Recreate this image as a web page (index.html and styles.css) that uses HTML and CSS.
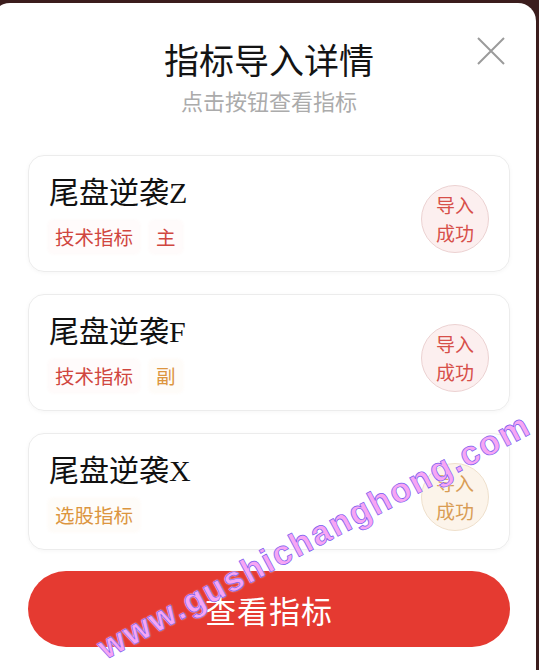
FILE: index.html
```html
<!DOCTYPE html>
<html>
<head>
  <meta charset="utf-8">
  <meta name="viewport" content="width=device-width, initial-scale=1">
  <title>指标导入详情</title>
  <link rel="stylesheet" href="styles.css">
</head>
<body>
  <div class="modal">
    <button class="close" aria-label="关闭">
      <svg viewBox="0 0 28 28" width="28" height="28"><path d="M1 1L27 27M27 1L1 27" stroke="#9b9b9b" stroke-width="2" fill="none"/></svg>
    </button>
    <h1 class="title">指标导入详情</h1>
    <p class="subtitle">点击按钮查看指标</p>

    <div class="list">
      <div class="card">
        <div class="info">
          <div class="name">尾盘逆袭Z</div>
          <div class="tags">
            <span class="tag red">技术指标</span>
            <span class="tag red">主</span>
          </div>
        </div>
        <div class="badge red">导入<br>成功</div>
      </div>

      <div class="card">
        <div class="info">
          <div class="name">尾盘逆袭F</div>
          <div class="tags">
            <span class="tag red">技术指标</span>
            <span class="tag orange">副</span>
          </div>
        </div>
        <div class="badge red">导入<br>成功</div>
      </div>

      <div class="card">
        <div class="info">
          <div class="name">尾盘逆袭X</div>
          <div class="tags">
            <span class="tag orange">选股指标</span>
          </div>
        </div>
        <div class="badge orange">导入<br>成功</div>
      </div>
    </div>

    <button class="view">查看指标</button>
  </div>
  <div class="watermark">www.gushichanghong.com</div>
</body>
</html>
```

FILE: styles.css
```css
body {
  margin: 0;
  background: #3b1d1d;
  font-family: 'Noto Sans CJK SC', sans-serif;
  overflow: hidden;
}

.modal {
  position: relative;
  margin: 3px 3px 0 -8px;
  min-height: 667px;
  padding: 36px 26px 0 36px;
  box-sizing: border-box;
  background: #fff;
  border-radius: 18px 18px 0 0;
}

.close {
  position: absolute;
  top: 34px;
  right: 31px;
  padding: 0;
  border: 0;
  background: none;
  width: 28px;
  height: 28px;
}
.close svg { display: block }

.title {
  margin: 0;
  font-size: 35px;
  line-height: 40px;
  font-weight: 400;
  color: #141414;
  text-align: center;
}
.subtitle {
  margin: 7px 0 0;
  font-size: 22px;
  line-height: 28px;
  color: #ababab;
  text-align: center;
}

.list {
  display: flex;
  flex-direction: column;
  gap: 22px;
  margin-top: 41px;
}

.card {
  display: flex;
  align-items: center;
  justify-content: space-between;
  height: 117px;
  box-sizing: border-box;
  padding: 0 20px;
  border: 1px solid #ececec;
  border-radius: 16px;
  box-shadow: 0 1px 4px rgba(0,0,0,.04);
}

.name {
  font-family: 'Liberation Serif', 'Noto Sans CJK SC', serif;
  font-size: 30px;
  line-height: 36px;
  color: #111;
}

.tags {
  display: flex;
  gap: 11px;
  margin-top: 10px;
}
.tag {
  padding: 3px 6px;
  font-size: 19.5px;
  line-height: 26px;
  border-radius: 4px;
}
.tag.red {
  color: #d0463f;
  background: rgba(230,70,60,.02);
  box-shadow: 0 0 4px rgba(230,70,60,.05);
}
.tag.orange {
  color: #dc953f;
  background: rgba(235,150,60,.03);
  box-shadow: 0 0 4px rgba(235,150,60,.07);
}

.badge {
  display: flex;
  align-items: center;
  justify-content: center;
  width: 68px;
  height: 68px;
  margin-top: 11px;
  box-sizing: border-box;
  border-radius: 50%;
  font-size: 19px;
  line-height: 28px;
  text-align: center;
}
.badge.red {
  color: #d7504a;
  background: #fcefef;
  border: 1px solid #ecd2d2;
}
.badge.orange {
  color: #d99d55;
  background: #fcf4ea;
  border: 1px solid #efe0cc;
}

.view {
  display: block;
  width: 100%;
  height: 76px;
  margin-top: 21px;
  border: 0;
  border-radius: 38px;
  background: #e53a31;
  color: #fff;
  font-family: inherit;
  font-size: 31px;
  letter-spacing: 1px;
}

.watermark {
  position: absolute;
  left: 314px;
  top: 536px;
  transform: translate(-50%, -50%) rotate(-28deg);
  white-space: nowrap;
  font-family: 'Liberation Sans', sans-serif;
  font-weight: 700;
  font-size: 34px;
  letter-spacing: 2px;
  color: #f7a6f4;
  -webkit-text-stroke: 0.7px #7a5cf0;
  text-shadow: 0 0 2px #fff, 0 0 1px #fff;
  pointer-events: none;
}
```
